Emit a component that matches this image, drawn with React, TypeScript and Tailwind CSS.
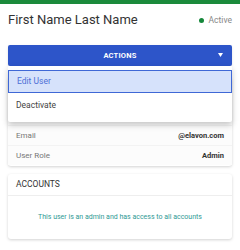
import { useState } from "react";

function App() {
  const [open] = useState(true);

  return (
    <div className="w-[240px] h-[250px] overflow-hidden bg-white font-['Roboto',sans-serif]">
      <div className="h-1 bg-[#1b8a3b]" />

      {/* Header */}
      <div className="flex items-center justify-between px-2 h-8">
        <h1 className="text-[13px] text-[#333]">First Name Last Name</h1>
        <div className="flex items-center gap-[5px]">
          <span className="w-[5px] h-[5px] rounded-full bg-[#15873a]" />
          <span className="text-[8.5px] text-[#888]">Active</span>
        </div>
      </div>

      <div className="px-2 pt-[9px]">
        {/* Actions dropdown */}
        <div className="relative">
          <button className="w-full h-[21px] rounded-[2px] bg-[#2d55c9] text-white text-[7.5px] font-bold tracking-[0.2px] relative flex items-center justify-center shadow-sm">
            ACTIONS
            <svg
              className="absolute right-[9px] top-[8px]"
              width="5"
              height="4"
              viewBox="0 0 5 4"
            >
              <path d="M0 0h5L2.5 4z" fill="white" />
            </svg>
          </button>

          {open && (
            <div className="absolute top-full left-0 right-0 z-10 bg-white pt-1 pb-[5px] rounded-b-[2px] shadow-[0_3px_6px_rgba(0,0,0,0.22)]">
              <div className="h-[23px] flex items-center px-2 bg-[#d6e2fb] border border-[#3f68d6] text-[8.5px] text-[#4d6fd6]">
                Edit User
              </div>
              <div className="h-6 flex items-center px-2 text-[8.5px] text-[#444]">
                Deactivate
              </div>
            </div>
          )}
        </div>

        {/* Details card */}
        <div className="mt-[11px] bg-white rounded-[3px] shadow-[0_1px_3px_rgba(0,0,0,0.18)] pt-2 pb-px">
          {[
            ["First Name", "First Name"],
            ["Last Name", "Last Name"],
            ["Email", "@elavon.com"],
            ["User Role", "Admin"],
          ].map(([label, value]) => (
            <div
              key={label}
              className="h-5 flex items-center justify-between px-2 bg-[#fcfcfc] border-t border-[#f3f3f3] text-[7.5px]"
            >
              <span className="text-[#777] text-[8px]">{label}</span>
              <span className="font-bold text-[#333]">{value}</span>
            </div>
          ))}
        </div>

        {/* Accounts card */}
        <div className="mt-2 bg-white rounded-[3px] shadow-[0_1px_3px_rgba(0,0,0,0.18)]">
          <div className="h-[22px] flex items-center px-2 border-b border-[#eee] text-[8.5px] text-[#333]">
            ACCOUNTS
          </div>
          <div className="h-[43px] flex items-center justify-center text-[7px] text-[#2f9a95]">
            This user is an admin and has access to all accounts
          </div>
        </div>
      </div>
    </div>
  );
}

export default App;
